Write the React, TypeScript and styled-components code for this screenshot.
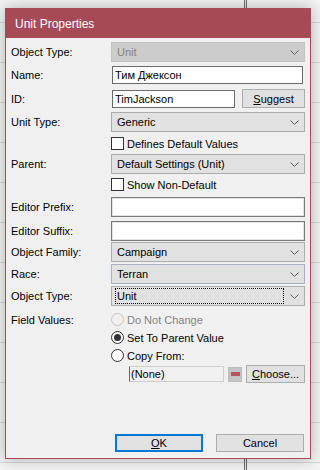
import React from "react";
import styled, { createGlobalStyle } from "styled-components";

const Global = createGlobalStyle`
  html, body {
    margin: 0;
    padding: 0;
  }
  body {
    width: 320px;
    height: 470px;
    overflow: hidden;
    background-color: #f3f3f3;
    background-image:
      linear-gradient(90deg, transparent 244px, #6a6a6a 244px, #6a6a6a 245px, #e8e8e8 245px, #e8e8e8 246px, #6a6a6a 246px, #6a6a6a 247px, transparent 247px),
      repeating-linear-gradient(180deg, transparent 0, transparent 22px, #d6d6d6 22px, #d6d6d6 23px, transparent 23px, transparent 40px);
    font-family: "Liberation Sans", Arial, sans-serif;
    font-size: 11px;
    color: #000;
  }
`;

const Page = styled.div`
  padding: 8px 0 0 5px;
`;

const Dialog = styled.div`
  width: 306px;
  height: 451px;
  box-sizing: border-box;
  border: 1px solid #a64b55;
  background: #f0f0f0;
  box-shadow: 0 0 14px rgba(0, 0, 0, 0.28);
  display: flex;
  flex-direction: column;
`;

const TitleBar = styled.div`
  height: 29px;
  flex: none;
  background: #a64b55;
  color: #fff;
  font-size: 12px;
  display: flex;
  align-items: center;
  padding-left: 9px;
`;

const Body = styled.div`
  flex: 1;
  display: flex;
  flex-direction: column;
  padding: 0 5px 6px 5px;
`;

const Row = styled.div<{ $mt: number; $h: number }>`
  display: grid;
  grid-template-columns: 100px 194px;
  align-items: center;
  margin-top: ${(p) => p.$mt}px;
  height: ${(p) => p.$h}px;
`;

const Label = styled.div`
  white-space: nowrap;
  align-self: center;
`;

const Combo = styled.div<{ $disabled?: boolean; $hover?: boolean }>`
  height: 20px;
  box-sizing: border-box;
  border: 1px solid
    ${(p) => (p.$disabled ? "#c4c4c4" : p.$hover ? "#a6b3c2" : "#adadad")};
  background: ${(p) => (p.$disabled ? "#cccccc" : "#e1e1e1")};
  color: ${(p) => (p.$disabled ? "#838383" : "#000")};
  display: flex;
  align-items: center;
  padding: 0 5px 0 3px;
`;

const ComboText = styled.span<{ $focus?: boolean }>`
  flex: 1;
  height: 16px;
  line-height: 16px;
  padding-left: 1px;
  box-sizing: border-box;
  border: 1px dotted ${(p) => (p.$focus ? "#000" : "transparent")};
  margin-right: 6px;
  display: flex;
  align-items: center;
`;

const Chevron = styled.svg`
  flex: none;
  display: block;
`;

const TextBox = styled.div<{ $w?: number; $h?: number; $dark?: boolean }>`
  height: ${(p) => p.$h ?? 18}px;
  width: ${(p) => (p.$w ? `${p.$w}px` : "auto")};
  box-sizing: border-box;
  background: #fff;
  border: 1px solid ${(p) => (p.$dark ? "#6b6b6b" : "#7a7a7a")};
  box-shadow: ${(p) => (p.$dark ? "none" : "inset 0 0 0 1px #e3e3e3")};
  display: flex;
  align-items: center;
  padding-left: 2px;
  white-space: nowrap;
`;

const NameBox = styled(TextBox)`
  margin: 0 2px 0 1px;
`;

const Inline = styled.div<{ $gap: number; $pl?: number }>`
  display: flex;
  align-items: center;
  gap: ${(p) => p.$gap}px;
  padding-left: ${(p) => p.$pl ?? 0}px;
`;

const Button = styled.div<{ $w: number; $h?: number; $default?: boolean }>`
  width: ${(p) => p.$w}px;
  height: ${(p) => p.$h ?? 19}px;
  box-sizing: border-box;
  background: #e1e1e1;
  border: ${(p) => (p.$default ? "2px solid #0078d7" : "1px solid #adadad")};
  display: flex;
  align-items: center;
  justify-content: center;
  flex: none;
`;

const U = styled.span`
  text-decoration: underline;
`;

const Check = styled.label`
  display: flex;
  align-items: center;
  gap: 3px;
  grid-column: 2;
  height: 13px;
`;

const CheckBox = styled.span`
  width: 13px;
  height: 13px;
  box-sizing: border-box;
  border: 1px solid #333;
  background: #fff;
  flex: none;
`;

const RadioGroup = styled.div`
  display: flex;
  flex-direction: column;
  gap: 5px;
`;

const FieldRow = styled.div`
  display: grid;
  grid-template-columns: 100px 194px;
  margin-top: 7px;
`;

const FieldLabel = styled.div`
  height: 13px;
  display: flex;
  align-items: center;
`;

const Radio = styled.div<{ $disabled?: boolean }>`
  display: flex;
  align-items: center;
  gap: 3px;
  height: 13px;
  color: ${(p) => (p.$disabled ? "#838383" : "#000")};
`;

const RadioCircle = styled.span<{ $checked?: boolean; $disabled?: boolean }>`
  width: 13px;
  height: 13px;
  box-sizing: border-box;
  border-radius: 50%;
  border: 1px solid ${(p) => (p.$disabled ? "#c6c6c6" : "#333")};
  background: ${(p) => (p.$disabled ? "#f0f0f0" : "#fff")};
  flex: none;
  display: flex;
  align-items: center;
  justify-content: center;
  &::after {
    content: "";
    display: ${(p) => (p.$checked ? "block" : "none")};
    width: 7px;
    height: 7px;
    border-radius: 50%;
    background: #333;
  }
`;

const ReadOnlyBox = styled.div`
  width: 96px;
  height: 16px;
  box-sizing: border-box;
  border: 1px solid #cfcfcf;
  border-left-color: #6b6b6b;
  background: #f0f0f0;
  display: flex;
  align-items: center;
  padding-left: 1px;
`;

const Swatch = styled.div`
  width: 14px;
  height: 15px;
  box-sizing: border-box;
  background: #c3c3c3;
  border: 1px solid #bdbdbd;
  display: flex;
  align-items: center;
  justify-content: center;
  &::after {
    content: "";
    width: 9px;
    height: 4px;
    background: #b9525d;
  }
`;

const ChooseRow = styled.div`
  grid-column: 2;
  margin-top: 3px;
  height: 18px;
`;

const Footer = styled.div`
  margin-top: auto;
  display: flex;
  justify-content: flex-end;
  gap: 13px;
  padding-right: 1px;
`;

const ChevronIcon = () => (
  <Chevron width="9" height="5" viewBox="0 0 9 5">
    <polyline
      points="0.5,0.5 4.5,4.5 8.5,0.5"
      fill="none"
      stroke="#606060"
      strokeWidth="1"
    />
  </Chevron>
);

type ComboProps = {
  text: string;
  disabled?: boolean;
  hover?: boolean;
  focus?: boolean;
};

const ComboBox = ({ text, disabled, hover, focus }: ComboProps) => (
  <Combo $disabled={disabled} $hover={hover}>
    <ComboText $focus={focus}>{text}</ComboText>
    <ChevronIcon />
  </Combo>
);

export default function App() {
  return (
    <>
      <Global />
      <Page>
        <Dialog>
          <TitleBar>Unit Properties</TitleBar>
          <Body>
            <Row $mt={4} $h={20}>
              <Label>Object Type:</Label>
              <ComboBox text="Unit" disabled />
            </Row>
            <Row $mt={4} $h={18}>
              <Label>Name:</Label>
              <NameBox $dark>Тим Джексон</NameBox>
            </Row>
            <Row $mt={5} $h={19}>
              <Label>ID:</Label>
              <Inline $gap={7} $pl={1}>
                <TextBox $dark $w={123}>
                  TimJackson
                </TextBox>
                <Button $w={63}>
                  <span>
                    <U>S</U>uggest
                  </span>
                </Button>
              </Inline>
            </Row>
            <Row $mt={4} $h={20}>
              <Label>Unit Type:</Label>
              <ComboBox text="Generic" />
            </Row>
            <Row $mt={5} $h={13}>
              <Check>
                <CheckBox />
                Defines Default Values
              </Check>
            </Row>
            <Row $mt={4} $h={20}>
              <Label>Parent:</Label>
              <ComboBox text="Default Settings (Unit)" />
            </Row>
            <Row $mt={4} $h={13}>
              <Check>
                <CheckBox />
                Show Non-Default
              </Check>
            </Row>
            <Row $mt={6} $h={20}>
              <Label>Editor Prefix:</Label>
              <TextBox $h={20} />
            </Row>
            <Row $mt={4} $h={20}>
              <Label>Editor Suffix:</Label>
              <TextBox $h={20} />
            </Row>
            <Row $mt={1} $h={20}>
              <Label>Object Family:</Label>
              <ComboBox text="Campaign" />
            </Row>
            <Row $mt={2} $h={20}>
              <Label>Race:</Label>
              <ComboBox text="Terran" hover />
            </Row>
            <Row $mt={2} $h={20}>
              <Label>Object Type:</Label>
              <ComboBox text="Unit" focus />
            </Row>
            <FieldRow>
              <FieldLabel>Field Values:</FieldLabel>
              <RadioGroup>
                <Radio $disabled>
                  <RadioCircle $disabled />
                  Do Not Change
                </Radio>
                <Radio>
                  <RadioCircle $checked />
                  Set To Parent Value
                </Radio>
                <Radio>
                  <RadioCircle />
                  Copy From:
                </Radio>
              </RadioGroup>
              <ChooseRow>
                <Inline $gap={4} $pl={18}>
                  <ReadOnlyBox>(None)</ReadOnlyBox>
                  <Swatch />
                  <Button $w={59} $h={18}>
                    <span>
                      <U>C</U>hoose...
                    </span>
                  </Button>
                </Inline>
              </ChooseRow>
            </FieldRow>
            <Footer>
              <Button $w={88} $h={18} $default>
                <span>
                  <U>O</U>K
                </span>
              </Button>
              <Button $w={88} $h={18}>
                Cancel
              </Button>
            </Footer>
          </Body>
        </Dialog>
      </Page>
    </>
  );
}
